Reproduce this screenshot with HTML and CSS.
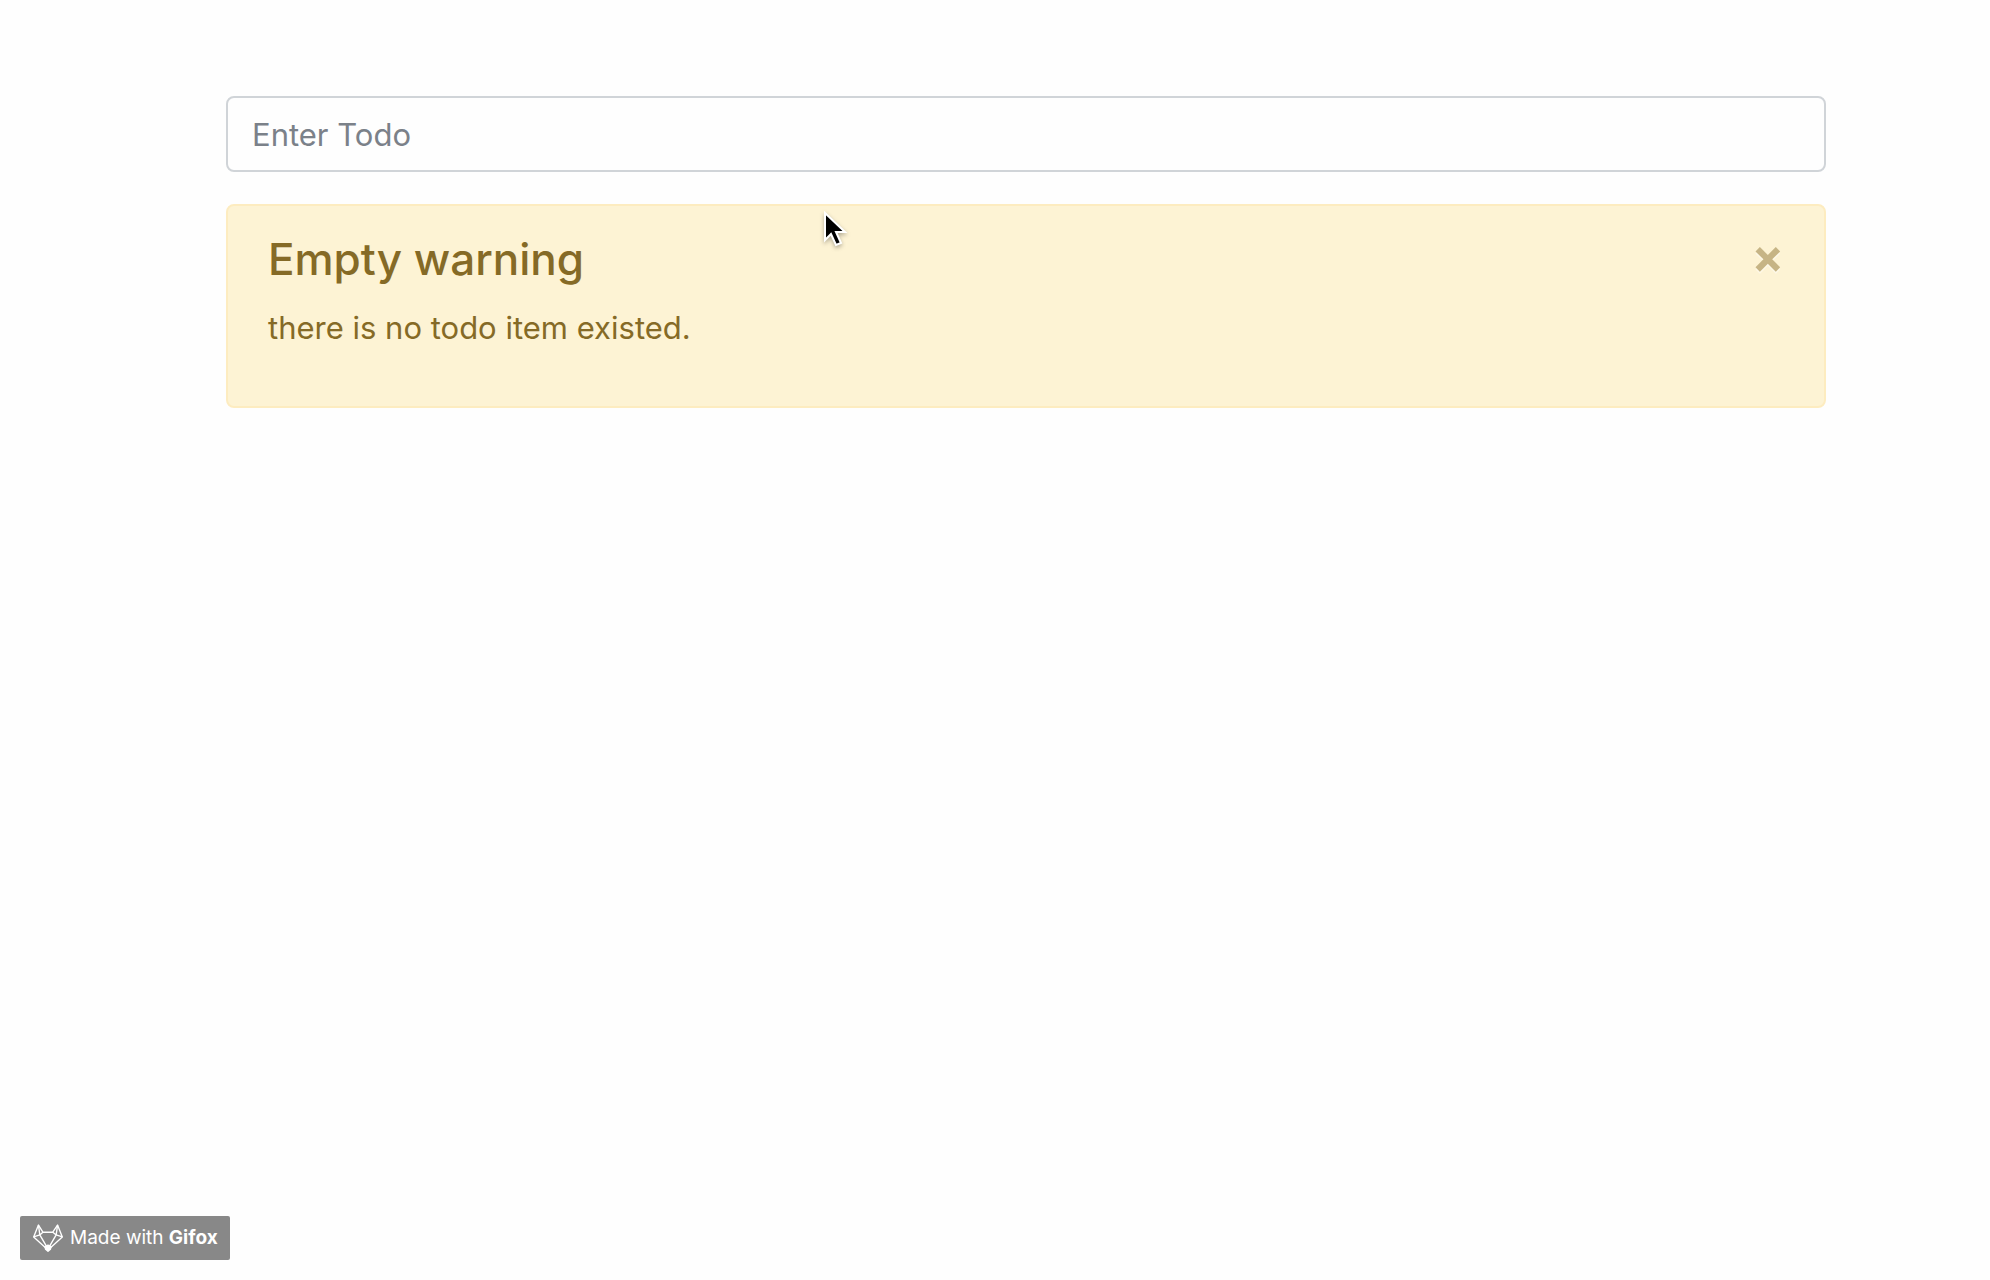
FILE: index.html
```html
<!DOCTYPE html>
<html lang="en">
    <head>
        <meta charset="utf-8">
        <title>Todo</title>
        <link rel="stylesheet" href="styles.css">
    </head>
    <body>
        <main class="container">
            <form class="todo-form">
                <input type="text" class="form-control" aria-label="Enter Todo" placeholder="Enter Todo">
            </form>
            <div class="alert" role="alert">
                <div class="alert-body">
                    <h4 class="alert-heading">Empty warning</h4>
                    <p>there is no todo item existed.</p>
                </div>
                <button type="button" class="close" aria-label="Close">&times;</button>
            </div>
        </main>

        <!-- recorder badge -->
        <a class="badge" href="#">
            <svg class="fox" viewBox="0 0 88 82" fill="none" stroke="#fff" stroke-width="4" stroke-linejoin="round">
                <path d="M16 3 L2 38 L44 76 L86 38 L72 3 L58 24 L29 24 Z" />
                <path d="M16 3 L20 32 L2 38 M72 3 L68 32 L86 38 M20 32 L29 24 M68 32 L58 24 M20 32 L41 68 M68 32 L47 68" />
                <path d="M35 66 L44 62 L53 66 L51 74 L44 80 L37 74 Z" fill="#fff" />
            </svg>
            <span>Made with <b>Gifox</b></span>
        </a>

        <!-- mouse pointer -->
        <svg class="pointer" viewBox="0 0 26 38">
            <path d="M2 2 L2 29 L8 23 L13 34 L18 32 L13 21 L22 21 Z" fill="#000" stroke="#fff" stroke-width="2" />
        </svg>
    </body>
</html>
```

FILE: styles.css
```css
* {
    box-sizing: border-box;
}

body {
    margin: 0;
    font-family: Inter, "Liberation Sans", sans-serif;
    font-size: 31px;
    line-height: 48px;
    color: #212529;
    background-color: #fefefe;
}

.container {
    padding: 96px 164px 0 226px;
}

.todo-form {
    margin-bottom: 32px;
}

.form-control {
    display: block;
    width: 100%;
    height: 76px;
    padding: 12px 24px;
    font: inherit;
    color: #495057;
    background-color: #fefefe;
    border: 2px solid #d0d4d8;
    border-radius: 8px;
}

.form-control::placeholder {
    color: #7b8189;
    opacity: 1;
}

.alert {
    display: flex;
    justify-content: space-between;
    align-items: flex-start;
    padding: 24px 40px;
    color: #856a26;
    background-color: #fdf3d4;
    border: 2px solid #fdecc0;
    border-radius: 8px;
}

.alert-heading {
    margin: 0 0 16px;
    font-size: 44px;
    font-weight: 500;
    line-height: 58px;
}

.alert p {
    margin: 0 0 30px;
}

.close {
    margin: 0;
    padding: 0;
    font-family: inherit;
    font-size: 48px;
    font-weight: 700;
    line-height: 52px;
    color: #856a26;
    text-shadow: 0 2px 0 #fff;
    background: none;
    border: 0;
    opacity: 0.45;
}

.badge {
    position: fixed;
    left: 20px;
    bottom: 20px;
    display: flex;
    align-items: center;
    gap: 7px;
    height: 44px;
    padding: 0 12px 0 13px;
    font-size: 19px;
    line-height: 24px;
    color: #fff;
    text-decoration: none;
    background-color: #888;
    border-radius: 2px;
}

.fox {
    width: 30px;
    height: 28px;
}

.pointer {
    position: absolute;
    left: 823px;
    top: 211px;
    width: 26px;
    height: 38px;
    filter: drop-shadow(0 2px 2px rgba(0, 0, 0, 0.3));
}
```
